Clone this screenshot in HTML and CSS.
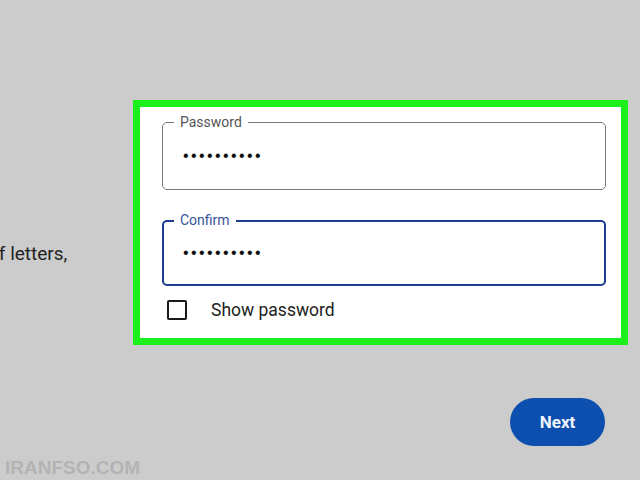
FILE: index.html
```html
<!DOCTYPE html>
<html>
<head>
<meta charset="utf-8">
<link rel="stylesheet" href="styles.css">
</head>
<body>
<div class="page">
  <div class="row">
    <div class="hint"><p class="hint-text">of letters,</p></div>
    <div class="card">
      <div class="field">
        <span class="label">Password</span>
        <div class="dots">••••••••••</div>
      </div>
      <div class="field focused">
        <span class="label">Confirm</span>
        <div class="dots">••••••••••</div>
      </div>
      <div class="check-row">
        <span class="checkbox"></span>
        <span class="check-label">Show password</span>
      </div>
    </div>
  </div>
  <div class="actions">
    <button class="next">Next</button>
  </div>
  <div class="watermark">IRANFSO.COM</div>
</div>
</body>
</html>
```
FILE: styles.css
```css
html, body {
  margin: 0;
  padding: 0;
}
body {
  width: 640px;
  height: 480px;
  overflow: hidden;
  background: #cccccc;
  font-family: Roboto, "Liberation Sans", sans-serif;
  color: #222;
}
.page {
  display: flex;
  flex-direction: column;
  padding-top: 100px;
}
.row {
  display: flex;
  align-items: flex-start;
}
.hint {
  width: 133px;
  overflow: hidden;
  padding-top: 143px;
}
.hint-text {
  margin: 0 0 0 -12px;
  font-size: 19px;
  line-height: 22px;
  white-space: nowrap;
  color: #222;
}
.card {
  box-sizing: border-box;
  width: 495px;
  height: 245px;
  border: 7px solid #1cf01c;
  background: #fff;
  padding: 15px 15px 0 22px;
  display: flex;
  flex-direction: column;
}
.field {
  position: relative;
  box-sizing: border-box;
  height: 68px;
  border: 1px solid #7a7a7a;
  border-radius: 5px;
  display: flex;
  align-items: center;
  padding-left: 20px;
}
.field.focused {
  margin-top: 30px;
  height: 66px;
  border: 2px solid #1d3d8f;
  padding-left: 19px;
}
.label {
  position: absolute;
  top: -10px;
  left: 11px;
  padding: 0 6px;
  background: #fff;
  font-size: 14px;
  line-height: 18px;
  color: #555;
}
.focused .label {
  top: -11px;
  left: 10px;
  color: #35549a;
}
.dots {
  font-family: "Liberation Sans", sans-serif;
  font-size: 16px;
  letter-spacing: 2.4px;
  color: #111;
  line-height: 20px;
}
.check-row {
  display: flex;
  align-items: center;
  margin-top: 14px;
  padding-left: 5px;
}
.checkbox {
  box-sizing: border-box;
  width: 20px;
  height: 20px;
  border: 2px solid #1a1a1a;
  border-radius: 2px;
}
.check-label {
  margin-left: 24px;
  font-size: 17.5px;
  color: #222;
}
.actions {
  display: flex;
  justify-content: flex-end;
  padding-right: 35px;
  margin-top: 53px;
}
.next {
  width: 95px;
  height: 48px;
  border: none;
  border-radius: 24px;
  background: #0c4fae;
  color: #eef3fb;
  font-family: Roboto, "Liberation Sans", sans-serif;
  font-size: 17px;
  font-weight: 700;
}
.watermark {
  margin-top: 12px;
  padding-left: 5px;
  font-family: "Liberation Sans", sans-serif;
  font-weight: 700;
  font-size: 19px;
  line-height: 20px;
  color: #b3b3b3;
}
```
